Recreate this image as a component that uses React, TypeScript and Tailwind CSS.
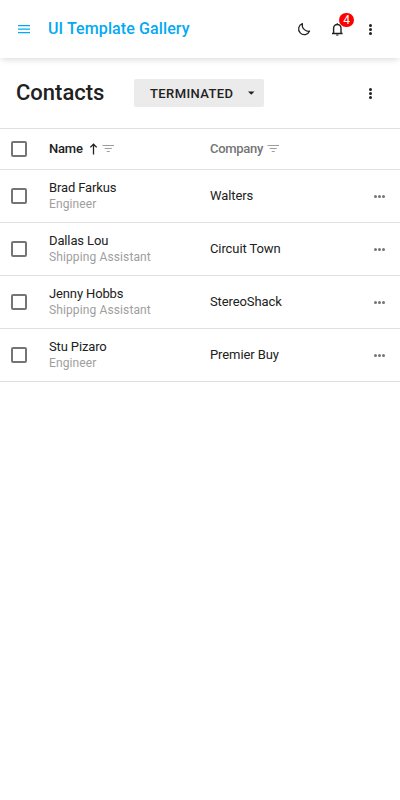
import React from "react";

const contacts = [
  { name: "Brad Farkus", role: "Engineer", company: "Walters" },
  { name: "Dallas Lou", role: "Shipping Assistant", company: "Circuit Town" },
  { name: "Jenny Hobbs", role: "Shipping Assistant", company: "StereoShack" },
  { name: "Stu Pizaro", role: "Engineer", company: "Premier Buy" },
];

function MenuIcon() {
  return (
    <svg className="h-[18px] w-[18px]" viewBox="0 0 18 18" fill="#03a9f4">
      <path d="M3 5h12v1.2H3zM3 8.5h12v1.2H3zM3 12h12v1.2H3z" />
    </svg>
  );
}

function MoonIcon() {
  return (
    <svg className="h-[18px] w-[18px]" viewBox="0 0 18 18" fill="none" stroke="#212121" strokeWidth="1.25" strokeLinejoin="round">
      <path d="M7.4 3.6A5.7 5.7 0 1 0 14.6 11.1C10.6 12 6.4 8.2 7.4 3.6Z" />
    </svg>
  );
}

function BellIcon() {
  return (
    <svg className="h-[18px] w-[18px]" viewBox="0 0 18 18" fill="none" stroke="#212121" strokeWidth="1.4">
      <path d="M5.6 13.3V8.2a3.7 3.7 0 0 1 7.4 0v5.1M4 13.5h10.6M9.3 4.6V3.2" />
      <path d="M8 14.6h2.6c0 .8-.5 1.2-1.3 1.2S8 15.4 8 14.6Z" fill="#212121" stroke="none" />
    </svg>
  );
}

function OverflowIcon() {
  return (
    <svg className="h-[18px] w-[18px]" viewBox="0 0 18 18" fill="#212121">
      <circle cx="9.5" cy="5.5" r="1.5" />
      <circle cx="9.5" cy="9.5" r="1.5" />
      <circle cx="9.5" cy="13.5" r="1.5" />
    </svg>
  );
}

function MoreIcon() {
  return (
    <svg className="h-[18px] w-[18px]" viewBox="0 0 18 18" fill="#757575">
      <circle cx="5.5" cy="9.5" r="1.5" />
      <circle cx="9.5" cy="9.5" r="1.5" />
      <circle cx="13.5" cy="9.5" r="1.5" />
    </svg>
  );
}

function FilterIcon() {
  return (
    <svg className="h-[14px] w-[14px]" viewBox="0 0 14 14" fill="#9e9e9e">
      <path d="M1.5 3h11.5v1.1h-11.5zM3.7 6h7.1v1.1h-7.1zM5.7 9h3.1v1.1h-3.1z" />
    </svg>
  );
}

function SortIcon() {
  return (
    <svg className="h-[14px] w-[14px]" viewBox="0 0 14 14" fill="none" stroke="#212121" strokeWidth="1.3">
      <path d="M7.5 12.5V2.2M4.3 5.4L7.5 2.2L10.7 5.4" />
    </svg>
  );
}

function Checkbox() {
  return <span className="ml-[11px] block h-4 w-4 shrink-0 rounded-[2px] border-2 border-[#757575]" />;
}

export default function App() {
  return (
    <div className="h-[800px] w-[400px] overflow-hidden bg-white text-[13px] text-[#212121] [font-family:Roboto,sans-serif]">
      <header className="relative flex h-[58px] items-center bg-white pl-[15px] pr-[21px] shadow-[0_3px_6px_-1px_rgba(0,0,0,0.13)]">
        <MenuIcon />
        <h1 className="ml-[15px] flex-1 text-base font-medium leading-6 tracking-[0.11px] text-[#03a9f4]">UI Template Gallery</h1>
        <div className="flex gap-[15px]">
          <MoonIcon />
          <div className="relative">
            <BellIcon />
            <span className="absolute -top-[7px] left-[11px] flex h-[14px] w-[15px] items-center justify-center rounded-full bg-[#ff0000] text-xs leading-[14px] text-white">4</span>
          </div>
          <OverflowIcon />
        </div>
      </header>
      <main>
        <div className="flex h-[70px] items-center pl-4 pr-[21px]">
          <h2 className="w-[118px] text-[22px] font-medium leading-7">Contacts</h2>
          <button className="flex h-7 w-[130px] items-center justify-between rounded-[2px] bg-[#ebebeb] pl-4 pr-[9px] text-[13px] font-medium tracking-[0.4px]">
            <span className="pt-[2px]">TERMINATED</span>
            <svg className="h-2 w-2" viewBox="0 0 8 8" fill="#212121">
              <path d="M1 2.5h6.5L4.25 5.8z" />
            </svg>
          </button>
          <div className="ml-auto">
            <OverflowIcon />
          </div>
        </div>
        <div className="flex h-[42px] items-center border-y border-[#e0e0e0] font-medium">
          <Checkbox />
          <div className="ml-[22px] flex w-[161px] items-center tracking-[-0.2px]">
            Name
            <span className="ml-[3px]"><SortIcon /></span>
            <span className="ml-px"><FilterIcon /></span>
          </div>
          <div className="flex items-center gap-[3px] tracking-[-0.3px] text-[#757575]">
            Company
            <FilterIcon />
          </div>
        </div>
        {contacts.map((c) => (
          <div key={c.name} className="flex h-[53px] items-center border-b border-[#e0e0e0]">
            <Checkbox />
            <div className="ml-[22px] w-[161px] leading-4">
              <div className="tracking-[-0.13px]">{c.name}</div>
              <div className="text-xs leading-4 tracking-[0.12px] text-[#9e9e9e]">{c.role}</div>
            </div>
            <div className="flex-1 tracking-[-0.1px]">{c.company}</div>
            <div className="mr-3">
              <MoreIcon />
            </div>
          </div>
        ))}
      </main>
    </div>
  );
}
